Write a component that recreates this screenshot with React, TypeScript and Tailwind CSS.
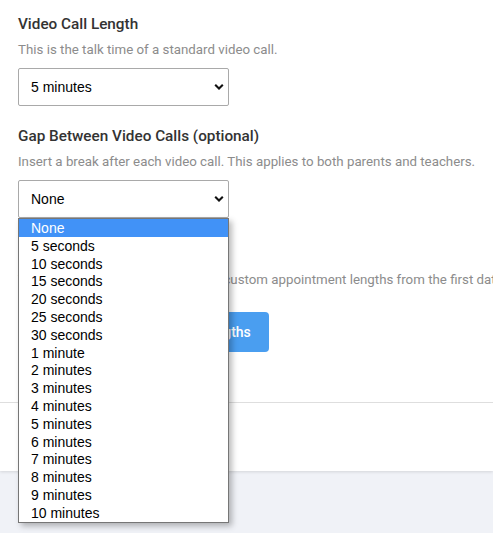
import React from "react";

const gapOptions = [
	"None",
	"5 seconds",
	"10 seconds",
	"15 seconds",
	"20 seconds",
	"25 seconds",
	"30 seconds",
	"1 minute",
	"2 minutes",
	"3 minutes",
	"4 minutes",
	"5 minutes",
	"6 minutes",
	"7 minutes",
	"8 minutes",
	"9 minutes",
	"10 minutes",
];

function Chevron() {
	return (
		<svg width="10" height="7" viewBox="0 0 10 7" className="absolute right-[4px] top-1/2 -translate-y-1/2">
			<polyline points="1.2,1.3 5,5 8.8,1.3" fill="none" stroke="#111" strokeWidth="2.1" />
		</svg>
	);
}

function FakeSelect({ value, children }: { value: string; children?: React.ReactNode }) {
	return (
		<div className="relative mt-[9px] h-[38px] w-[211px] rounded-[2px] border border-[#a9a9a9] bg-white">
			<span className="absolute left-[12px] top-1/2 -translate-y-1/2 text-[14px] text-black [font-family:'Liberation_Sans',Arial,sans-serif]">
				{value}
			</span>
			<Chevron />
			{children}
		</div>
	);
}

function Heading({ children, className = "" }: { children: React.ReactNode; className?: string }) {
	return (
		<h2 className={`text-[15.3px] leading-[20px] font-medium text-[#333] ${className}`}>{children}</h2>
	);
}

function Help({ children }: { children: React.ReactNode }) {
	return <p className="mt-[7px] text-[13.3px] leading-[18px] text-[#8c8c8c] whitespace-nowrap">{children}</p>;
}

export default function App() {
	return (
		<div className="min-h-screen overflow-hidden bg-[#f0f2f7] [font-family:Roboto,'Noto_Sans',sans-serif]">
			<div className="bg-white shadow-[0_1px_3px_rgba(0,0,0,0.12)]">
				<div className="px-[18px] pt-[14px] pb-[50px]">
					<section>
						<Heading>Video Call Length</Heading>
						<Help>This is the talk time of a standard video call.</Help>
						<FakeSelect value="5 minutes" />
					</section>

					<section className="mt-[20px]">
						<Heading>Gap Between Video Calls (optional)</Heading>
						<Help>Insert a break after each video call. This applies to both parents and teachers.</Help>
						<FakeSelect value="None">
							{/* open native-style option list */}
							<ul className="absolute left-[-1px] top-[37px] z-10 w-[211px] border border-[#767676] bg-white shadow-[3px_3px_6px_rgba(0,0,0,0.28)] [font-family:'Liberation_Sans',Arial,sans-serif]">
								{gapOptions.map((opt, i) => (
									<li
										key={opt}
										className={`h-[17.8px] pl-[12px] pt-[1px] text-[14px] leading-[16.8px] ${i === 0 ? "bg-[#4192f7] text-white" : "text-black"}`}
									>
										{opt}
									</li>
								))}
							</ul>
						</FakeSelect>
					</section>

					<section className="mt-[26px]">
						<Heading>Custom Appointment Lengths</Heading>
						<Help>Teachers can override this and set custom appointment lengths from the first date of the event.</Help>
						<button
							type="button"
							className="mt-[23px] h-[40px] w-[251px] rounded-[4px] bg-[#4a9ef0] text-[14px] font-medium text-white"
						>
							Edit Custom Appointment Lengths
						</button>
					</section>
				</div>

				<div className="flex h-[69px] items-center border-t border-[#dedede] px-[18px]">
					<button type="button" className="h-[38px] rounded-[4px] bg-[#4a9ef0] px-[18px] text-[14px] font-medium text-white">
						Save
					</button>
				</div>
			</div>
		</div>
	);
}
